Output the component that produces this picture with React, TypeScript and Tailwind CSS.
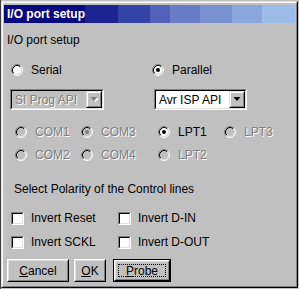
import React from 'react'

const GRAY_TEXT = 'text-[#808080] [text-shadow:1px_1px_0_#ffffff]'

function Radio({ checked, disabled }: { checked?: boolean; disabled?: boolean }) {
  return (
    <svg width="12" height="12" viewBox="0 0 12 12" className="shrink-0">
      <circle cx="6" cy="6" r="4" fill={disabled ? '#c0c0c0' : '#ffffff'} />
      <path d="M2.11 9.89 A5.5 5.5 0 0 1 9.89 2.11" fill="none" stroke="#808080" />
      <path d="M9.89 2.11 A5.5 5.5 0 0 1 2.11 9.89" fill="none" stroke="#ffffff" />
      <path d="M2.82 9.18 A4.5 4.5 0 0 1 9.18 2.82" fill="none" stroke="#000000" />
      <path d="M9.18 2.82 A4.5 4.5 0 0 1 2.82 9.18" fill="none" stroke="#dfdfdf" />
      {checked && <circle cx="6" cy="6" r="2" fill={disabled ? '#808080' : '#000000'} />}
    </svg>
  )
}

function RadioItem({ label, checked, disabled, width }: { label: string; checked?: boolean; disabled?: boolean; width?: string }) {
  return (
    <div className={`flex items-center gap-[8px] ${width ?? ''}`}>
      <Radio checked={checked} disabled={disabled} />
      <span className={disabled ? GRAY_TEXT : 'text-black'}>{label}</span>
    </div>
  )
}

function Checkbox({ label, width }: { label: string; width?: string }) {
  return (
    <div className={`flex items-center gap-[7px] ${width ?? ''}`}>
      <div className="w-[13px] h-[13px] border border-t-[#808080] border-l-[#808080] border-r-white border-b-white">
        <div className="w-full h-full bg-white border border-t-black border-l-black border-r-[#dfdfdf] border-b-[#dfdfdf]" />
      </div>
      <span>{label}</span>
    </div>
  )
}

function Combo({ value, disabled, width }: { value: string; disabled?: boolean; width: string }) {
  return (
    <div className={`${width} h-[21px] border border-t-[#808080] border-l-[#808080] border-r-white border-b-white`}>
      <div
        className={`h-full flex border border-t-black border-l-black border-r-[#dfdfdf] border-b-[#dfdfdf] ${
          disabled ? 'bg-[#c0c0c0]' : 'bg-white'
        }`}
      >
        <div className={`flex-1 flex items-center pl-[3px] ${disabled ? GRAY_TEXT : 'text-black'}`}>{value}</div>
        <div className="w-[16px] h-full border border-t-[#dfdfdf] border-l-[#dfdfdf] border-r-black border-b-black bg-[#c0c0c0]">
          <div className="w-full h-full flex items-center justify-center border border-t-white border-l-white border-r-[#808080] border-b-[#808080]">
            <svg width="8" height="5" viewBox="0 0 8 5">
              {disabled && <path d="M2 1 H9 L5.5 5 Z" fill="#ffffff" />}
              <path d="M0.5 0 H7.5 L4 4 Z" fill={disabled ? '#808080' : '#000000'} />
            </svg>
          </div>
        </div>
      </div>
    </div>
  )
}

function Button({ children, width, isDefault }: { children: React.ReactNode; width: string; isDefault?: boolean }) {
  const frame = (
    <div className="w-full h-full border border-t-white border-l-white border-r-black border-b-black">
      <div className="w-full h-full border border-t-[#dfdfdf] border-l-[#dfdfdf] border-r-[#808080] border-b-[#808080] flex items-center justify-center p-[2px]">
        {isDefault ? (
          <div className="w-full h-full border border-dotted border-black flex items-center justify-center">{children}</div>
        ) : (
          children
        )}
      </div>
    </div>
  )
  return (
    <div className={`${width} h-[23px] ${isDefault ? 'border border-black' : ''}`}>{frame}</div>
  )
}

export default function App() {
  return (
    <div className="w-[299px] h-[289px] bg-[#c0c0c0] flex font-['Liberation_Sans',Arial,sans-serif] text-[12px] leading-[14px] text-black overflow-hidden">
      <div className="w-px h-full bg-[#404040]" />
      {/* Window */}
      <div className="mt-px w-[297px] h-[287px] border border-t-[#dfdfdf] border-l-[#dfdfdf] border-r-black border-b-black">
        <div className="w-full h-full border border-t-white border-l-white border-r-[#808080] border-b-[#808080] bg-[#c0c0c0] pt-[2px] px-px flex flex-col">
          {/* Title bar */}
          <div className="h-[18px] flex items-center pl-[3px] text-white font-bold bg-[linear-gradient(to_right,#08087f_0px,#08087f_81px,#1a2391_81px,#1a2391_114px,#3444a6_114px,#3444a6_146px,#5262bc_146px,#5262bc_166px,#687cc8_166px,#687cc8_196px,#7a92d2_196px,#7a92d2_228px,#8aa6dc_228px,#8aa6dc_258px,#9cbcea_258px)]">
            I/O port setup
          </div>

          {/* Body */}
          <div className="mt-[10px] h-[14px] pl-[3px]">I/O port setup</div>

          <div className="mt-[15px] h-[16px] pl-[7px] flex items-center">
            <RadioItem label="Serial" width="w-[141px]" />
            <RadioItem label="Parallel" checked />
          </div>

          <div className="mt-[11px] h-[21px] pl-[6px] flex">
            <Combo value="SI Prog API" disabled width="w-[94px]" />
            <div className="ml-[50px]">
              <Combo value="Avr ISP API" width="w-[93px]" />
            </div>
          </div>

          <div className="mt-[14px] h-[16px] pl-[11px] flex items-center">
            <RadioItem label="COM1" disabled width="w-[66px]" />
            <RadioItem label="COM3" checked disabled width="w-[77px]" />
            <RadioItem label="LPT1" checked width="w-[66px]" />
            <RadioItem label="LPT3" disabled />
          </div>

          <div className="mt-[7px] h-[16px] pl-[11px] flex items-center">
            <RadioItem label="COM2" disabled width="w-[66px]" />
            <RadioItem label="COM4" disabled width="w-[77px]" />
            <RadioItem label="LPT2" disabled />
          </div>

          <div className="mt-[19px] h-[14px] pl-[10px]">Select Polarity of the Control lines</div>

          <div className="mt-[14px] h-[16px] pl-[7px] flex items-center">
            <Checkbox label="Invert Reset" width="w-[107px]" />
            <Checkbox label="Invert D-IN" />
          </div>

          <div className="mt-[8px] h-[16px] pl-[7px] flex items-center">
            <Checkbox label="Invert SCKL" width="w-[107px]" />
            <Checkbox label="Invert D-OUT" />
          </div>

          <div className="mt-[9px] h-[23px] pl-[3px] flex">
            <Button width="w-[62px]">
              <span>
                <span className="underline">C</span>ancel
              </span>
            </Button>
            <div className="ml-[5px]">
              <Button width="w-[32px]">
                <span>
                  <span className="underline">O</span>K
                </span>
              </Button>
            </div>
            <div className="ml-[7px]">
              <Button width="w-[58px]" isDefault>
                <span>
                  <span className="underline">P</span>robe
                </span>
              </Button>
            </div>
          </div>
        </div>
      </div>
    </div>
  )
}
